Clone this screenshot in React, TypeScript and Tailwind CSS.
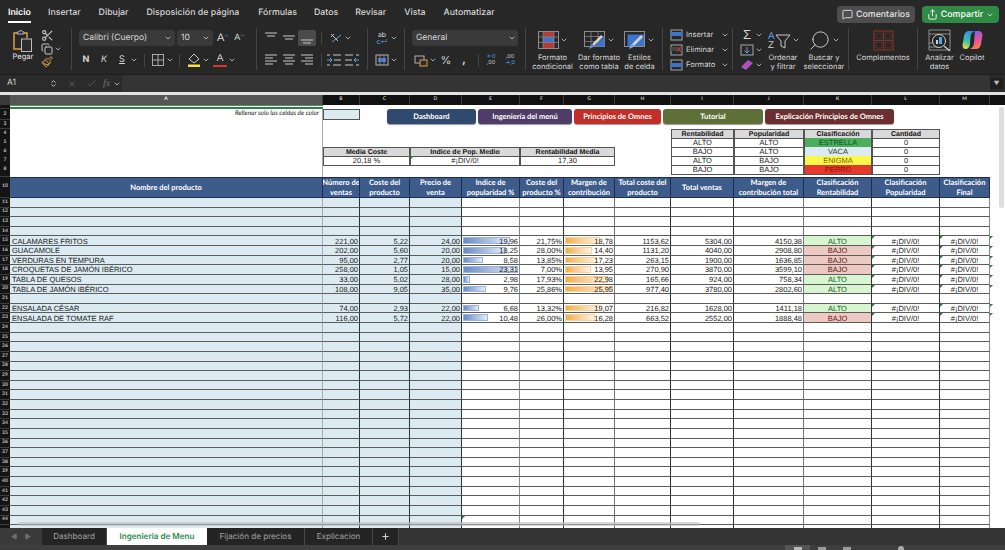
import type { ReactNode } from 'react'
import { ChevronDown, ChevronUp, Scissors, Copy, Paintbrush, MessageSquare, Share, X, Check, Search, Plus, Play } from 'lucide-react'

const COLS = 'grid grid-cols-[10px_313px_37px_50px_52px_58px_44px_51px_56px_63px_70px_68px_68px_50px_15px]'
const TEXT = "font-['Liberation_Sans',Arial,sans-serif]"
const LATO = "font-['Lato','Open_Sans',sans-serif]"

const tabs = [
  { name: 'Inicio', cls: 'ml-[8px] w-[23px] font-semibold text-white border-white' },
  { name: 'Insertar', cls: 'ml-[17px] border-transparent' },
  { name: 'Dibujar', cls: 'ml-[18px] border-transparent' },
  { name: 'Disposición de página', cls: 'ml-[18px] border-transparent' },
  { name: 'Fórmulas', cls: 'ml-[19px] border-transparent' },
  { name: 'Datos', cls: 'ml-[17px] border-transparent' },
  { name: 'Revisar', cls: 'ml-[17px] border-transparent' },
  { name: 'Vista', cls: 'ml-[18px] border-transparent' },
  { name: 'Automatizar', cls: 'ml-[18px] border-transparent' },
]

const colLetters = ['A', 'B', 'C', 'D', 'E', 'F', 'G', 'H', 'I', 'J', 'K', 'L', 'M']

// border colour of every column, the sheet mixes thin and medium lines
const colBorders = [
  'border-r-[#a8a8a8]', 'border-r-[#333]', 'border-r-[#333]', 'border-r-[#333]', 'border-r-[#888]', 'border-r-[#333]',
  'border-r-[#777]', 'border-r-[#333]', 'border-r-[#333]', 'border-r-[#777]', 'border-r-[#333]', 'border-r-[#333]', 'border-r-[#888]',
]

const headers = [
  ['Nombre del producto'], ['Número de', 'ventas'], ['Coste del', 'producto'], ['Precio de', 'venta'], ['Indice de', 'popularidad %'],
  ['Coste del', 'producto %'], ['Margen de', 'contribución'], ['Total coste del', 'producto'], ['Total ventas'],
  ['Margen de', 'contribución total'], ['Clasificación', 'Rentabilidad'], ['Clasificación', 'Popularidad'], ['Clasificación', 'Final'],
]

const products: Record<number, { name: string; v: string; c: string; p: string; ip: number; cp: string; m: number; tc: string; tv: string; mt: string; alto: boolean }> = {
  15: { name: 'CALAMARES FRITOS', v: '221,00', c: '5,22', p: '24,00', ip: 19.96, cp: '21,75%', m: 18.78, tc: '1153,62', tv: '5304,00', mt: '4150,38', alto: true },
  16: { name: 'GUACAMOLE', v: '202,00', c: '5,60', p: '20,00', ip: 18.25, cp: '28,00%', m: 14.4, tc: '1131,20', tv: '4040,00', mt: '2908,80', alto: false },
  17: { name: 'VERDURAS EN TEMPURA', v: '95,00', c: '2,77', p: '20,00', ip: 8.58, cp: '13,85%', m: 17.23, tc: '263,15', tv: '1900,00', mt: '1636,85', alto: false },
  18: { name: 'CROQUETAS DE JAMÓN IBÉRICO', v: '258,00', c: '1,05', p: '15,00', ip: 23.31, cp: '7,00%', m: 13.95, tc: '270,90', tv: '3870,00', mt: '3599,10', alto: false },
  19: { name: 'TABLA DE QUESOS', v: '33,00', c: '5,02', p: '28,00', ip: 2.98, cp: '17,93%', m: 22.98, tc: '165,66', tv: '924,00', mt: '758,34', alto: true },
  20: { name: 'TABLA DE JAMÓN IBÉRICO', v: '108,00', c: '9,05', p: '35,00', ip: 9.76, cp: '25,86%', m: 25.95, tc: '977,40', tv: '3780,00', mt: '2802,60', alto: true },
  22: { name: 'ENSALADA CÉSAR', v: '74,00', c: '2,93', p: '22,00', ip: 6.68, cp: '13,32%', m: 19.07, tc: '216,82', tv: '1628,00', mt: '1411,18', alto: true },
  23: { name: 'ENSALADA DE TOMATE RAF', v: '116,00', c: '5,72', p: '22,00', ip: 10.48, cp: '26,00%', m: 16.28, tc: '663,52', tv: '2552,00', mt: '1888,48', alto: false },
}

const miniRows = [
  { r: 'ALTO', p: 'ALTO', c: 'ESTRELLA', cls: 'bg-[#4cae5c] text-[#14501f]' },
  { r: 'BAJO', p: 'ALTO', c: 'VACA', cls: 'bg-[#dcebf1] text-[#333]' },
  { r: 'ALTO', p: 'BAJO', c: 'ENIGMA', cls: 'bg-[#fbf84c] text-[#7a6a00]' },
  { r: 'BAJO', p: 'BAJO', c: 'PERRO', cls: 'bg-[#e5392b] text-[#8f1410]' },
]

const num = (n: number) => n.toFixed(2).replace('.', ',')

function Chev({ cls = 'w-[10px]' }: { cls?: string }) {
  return (
    <span className={`flex justify-center text-[#c8c8c8] ${cls}`}>
      <ChevronDown size={8} strokeWidth={2.4} />
    </span>
  )
}

function Sep() {
  return <div className="w-px h-[42px] mt-[1px] bg-[#444] shrink-0" />
}

function VSep() {
  return <div className="w-px h-[13px] bg-[#444] shrink-0" />
}

// horizontal text lines, used for all the alignment buttons
function Lines({ kind }: { kind: 'top' | 'mid' | 'bottom' | 'left' | 'center' | 'right' }) {
  const sets = {
    top: [[1, 13, 2], [3, 9, 5]],
    mid: [[1, 13, 5], [3, 9, 8]],
    bottom: [[1, 13, 9], [3, 9, 12]],
    left: [[1, 13, 2], [1, 9, 5], [1, 13, 8], [1, 9, 11]],
    center: [[1, 13, 2], [3, 9, 5], [1, 13, 8], [3, 9, 11]],
    right: [[1, 13, 2], [5, 9, 5], [1, 13, 8], [5, 9, 11]],
  }
  return (
    <svg width="14" height="14" viewBox="0 0 14 14" stroke="#c8c8c8" strokeWidth="1">
      {sets[kind].map(([x, w, y], i) => <line key={i} x1={x} x2={x + w - 1} y1={y} y2={y} />)}
    </svg>
  )
}

function Big({ w, icon, chev = true, label }: { w: string; icon: ReactNode; chev?: boolean; label: string[] }) {
  return (
    <div className={`flex flex-col items-center shrink-0 ${w}`}>
      <div className="h-[26px] flex items-center gap-[1px]">
        {icon}
        {chev && <Chev cls="w-[8px]" />}
      </div>
      {label.map(l => (
        <span key={l} className="text-[7.5px] leading-[9px] text-[#d6d6d6] whitespace-nowrap">{l}</span>
      ))}
    </div>
  )
}

function CondIcon() {
  return (
    <svg width="21" height="18" viewBox="0 0 21 18">
      <rect x="0.5" y="0.5" width="20" height="17" fill="#2a2a2a" stroke="#8d8d8d" />
      <rect x="5" y="1" width="11" height="5" fill="#b53a36" />
      <rect x="5" y="6" width="11" height="5" fill="#3d74c9" />
      <rect x="5" y="11" width="11" height="6" fill="#b53a36" />
      <path d="M5 0.5V17.5M16 0.5V17.5M0.5 6H20.5M0.5 11.5H20.5" stroke="#8d8d8d" strokeWidth="0.7" />
    </svg>
  )
}

function TableIcon() {
  return (
    <svg width="22" height="19" viewBox="0 0 22 19">
      <rect x="0.5" y="0.5" width="20" height="15" fill="none" stroke="#8d8d8d" />
      <path d="M7 0.5V15.5M14 0.5V15.5M0.5 5.5H20.5M0.5 10.5H20.5" stroke="#8d8d8d" strokeWidth="0.7" />
      <path d="M20.5 5.5V15.5H10Z" fill="#3d74c9" />
      <path d="M8 13L17 4L19 6L10 15Z" fill="#d0d0d0" />
      <path d="M5 18Q6 14 8 13L10 15Q9 17 5 18Z" fill="#5b8fd8" />
    </svg>
  )
}

function StyleIcon() {
  return (
    <svg width="22" height="19" viewBox="0 0 22 19">
      <rect x="0.5" y="0.5" width="20" height="15" fill="none" stroke="#8d8d8d" />
      <path d="M3.5 3.5H20V15H3.5Z" fill="#3d74c9" />
      <path d="M8 13L17 4L19 6L10 15Z" fill="#d0d0d0" />
      <path d="M5 18Q6 14 8 13L10 15Q9 17 5 18Z" fill="#7fa6de" />
    </svg>
  )
}

function Copilot() {
  return (
    <svg width="21" height="20" viewBox="0 0 21 20">
      <defs>
        <linearGradient id="cpA" x1="0.6" y1="0" x2="0.3" y2="1">
          <stop offset="0" stopColor="#2f8ff0" />
          <stop offset="0.55" stopColor="#35c0a8" />
          <stop offset="1" stopColor="#e8d84a" />
        </linearGradient>
        <linearGradient id="cpB" x1="0.4" y1="0" x2="0.7" y2="1">
          <stop offset="0" stopColor="#7a62e8" />
          <stop offset="0.5" stopColor="#e84f9e" />
          <stop offset="1" stopColor="#f58b3a" />
        </linearGradient>
      </defs>
      <path d="M7 1H13Q9 2 8.5 7L8 14Q7.5 19 3.5 19Q0.5 19 0.5 15L2 6Q3 1 7 1Z" fill="url(#cpA)" />
      <path d="M13 1H16.5Q20 1 20.5 5L19 14Q18 19 14 19H7.5Q11.5 18 12 13L12.5 6Q12.5 3 13 1Z" fill="url(#cpB)" />
    </svg>
  )
}

function Ribbon() {
  const row = 'h-[16px] flex items-center'
  const col = 'flex flex-col gap-[6px] pt-[3px] shrink-0'
  const slot = 'flex items-center justify-center'
  return (
    <div className={`h-[47px] flex bg-[#272727] text-[#d6d6d6] font-['Inter',sans-serif]`}>
      {/* portapapeles */}
      <div className="w-[71px] shrink-0 flex pl-[10px]">
        <div className="flex flex-col items-center w-[26px]">
          <div className="h-[25px] flex items-end">
            <svg width="22" height="23" viewBox="0 0 22 23" fill="none">
              <path d="M5 4H2V20H9" stroke="#e0a043" strokeWidth="1.5" />
              <path d="M15 9V4H12" stroke="#e0a043" strokeWidth="1.5" />
              <path d="M5 5V3H7L8 1.5H9.5L10.5 3H12V5Z" stroke="#b9b9b9" />
              <rect x="9.5" y="10" width="10" height="12.5" fill="#2c2c2c" stroke="#bdbdbd" />
            </svg>
          </div>
          <span className="text-[7.5px] leading-[10px] font-medium">Pegar</span>
        </div>
        <div className="flex flex-col pl-[5px] pt-[2px] gap-[1px]">
          <Scissors size={13} className="text-[#c8c8c8]" />
          <div className="flex items-center"><Copy size={12} className="text-[#c8c8c8]" /><Chev cls="w-[9px]" /></div>
          <Paintbrush size={12} className="text-[#e0a043]" />
        </div>
      </div>
      <Sep />
      {/* fuente */}
      <div className={`${col} w-[184px] pl-[7px]`}>
        <div className={row}>
          <div className="w-[96px] h-[16px] rounded-[3px] bg-[#3a3a3a] flex items-center justify-between pl-[4px] pr-[2px] text-[8.5px]">
            Calibri (Cuerpo)<Chev />
          </div>
          <div className="ml-[2px] w-[36px] h-[16px] rounded-[3px] bg-[#3a3a3a] flex items-center justify-between pl-[4px] pr-[2px] text-[8.5px]">
            10<Chev />
          </div>
          <span className="ml-[4px] text-[11px] font-['Liberation_Sans',sans-serif]">A</span>
          <ChevronUp size={5} strokeWidth={3} className="mb-[5px] text-[#5aa2e8]" />
          <span className="ml-[5px] text-[9px] font-['Liberation_Sans',sans-serif]">A</span>
          <ChevronDown size={5} strokeWidth={3} className="mb-[5px] text-[#5aa2e8]" />
        </div>
        <div className={row}>
          <span className={`${slot} w-[14px] text-[9px] font-bold`}>N</span>
          <span className={`${slot} w-[14px] ml-[4px] text-[9px] italic`}>K</span>
          <span className={`${slot} w-[14px] ml-[4px] text-[9px] underline`}>S</span>
          <Chev />
          <span className="ml-[5px]"><VSep /></span>
          <svg className="ml-[6px]" width="14" height="14" viewBox="0 0 14 14" fill="none" stroke="#b4b4b4" strokeWidth="0.9">
            <rect x="1.5" y="1.5" width="11" height="11" />
            <path d="M7 1.5V12.5M1.5 7H12.5" />
          </svg>
          <Chev />
          <span className="ml-[4px]"><VSep /></span>
          <svg className="ml-[7px]" width="14" height="14" viewBox="0 0 14 14" fill="none">
            <path d="M7 1L12 6L7 10L2 6Z" stroke="#c8c8c8" />
            <rect x="1" y="11.5" width="12" height="2.5" fill="#f2e33d" />
          </svg>
          <Chev />
          <span className={`${slot} w-[14px] ml-[2px] text-[10px] font-['Liberation_Sans',sans-serif] pb-[2px] border-b-[2.5px] border-[#d8332c] h-[13px]`}>A</span>
          <Chev />
        </div>
      </div>
      <Sep />
      {/* alineacion */}
      <div className={`${col} w-[110px] pl-[5px]`}>
        <div className={row}>
          <span className={`${slot} w-[18px]`}><Lines kind="top" /></span>
          <span className={`${slot} w-[18px]`}><Lines kind="mid" /></span>
          <span className={`${slot} w-[18px] h-[16px] rounded-[2px] bg-[#4b4b4b]`}><Lines kind="bottom" /></span>
          <span className="ml-[5px]"><VSep /></span>
          <svg className="ml-[7px]" width="14" height="14" viewBox="0 0 14 14" fill="none" stroke="#c8c8c8">
            <path d="M2 3L9 10" />
            <path d="M3 11L12 4" stroke="#5aa2e8" />
            <path d="M2 6L5 3" />
          </svg>
          <Chev />
        </div>
        <div className={row}>
          <span className={`${slot} w-[18px]`}><Lines kind="left" /></span>
          <span className={`${slot} w-[18px]`}><Lines kind="center" /></span>
          <span className={`${slot} w-[18px]`}><Lines kind="right" /></span>
          <span className="ml-[5px]"><VSep /></span>
          <svg className="ml-[4px]" width="16" height="14" viewBox="0 0 16 14" fill="none" stroke="#c8c8c8">
            <path d="M7 2H15M7 12H15M8 7H15M1 2H4M1 12H4" />
            <path d="M1 7H6M4 5L6 7L4 9" stroke="#5aa2e8" />
          </svg>
          <svg className="ml-[2px]" width="16" height="14" viewBox="0 0 16 14" fill="none" stroke="#c8c8c8">
            <path d="M1 2H9M1 12H9M1 7H8M12 2H15M12 12H15" />
            <path d="M10 7H15M12 5L10 7L12 9" stroke="#5aa2e8" />
          </svg>
        </div>
      </div>
      <Sep />
      {/* ajustar y combinar */}
      <div className={`${col} w-[36px] pl-[7px]`}>
        <div className={row}>
          <span className="w-[14px] text-[7px] leading-[7px] text-center">ab<br /><span className="text-[#5aa2e8]">c↵</span></span>
          <Chev />
        </div>
        <div className={row}>
          <svg width="14" height="14" viewBox="0 0 14 14" fill="none">
            <rect x="1" y="2" width="12" height="10" stroke="#b4b4b4" />
            <rect x="3" y="5" width="8" height="4" fill="#3d74c9" />
            <path d="M5 2V12M9 2V12" stroke="#b4b4b4" strokeWidth="0.6" />
          </svg>
          <Chev />
        </div>
      </div>
      <Sep />
      {/* numero */}
      <div className={`${col} w-[120px]`}>
        <div className={row}>
          <div className="ml-[7px] w-[106px] h-[16px] rounded-[3px] bg-[#3a3a3a] flex items-center justify-between pl-[4px] pr-[1px] text-[8.5px]">
            General<Chev />
          </div>
        </div>
        <div className={row}>
          <svg className="ml-[9px]" width="14" height="14" viewBox="0 0 14 14" fill="none">
            <rect x="1" y="3" width="9" height="7" stroke="#b4b4b4" />
            <rect x="6" y="7" width="7" height="6" fill="#2c2c2c" stroke="#e0a043" />
          </svg>
          <Chev />
          <span className={`${slot} w-[16px] text-[11px] text-[#cfcfcf]`}>%</span>
          <span className={`${slot} w-[16px] ml-[2px] text-[12px] font-bold text-[#cfcfcf] pb-[2px]`}>,</span>
          <span className="ml-[6px]"><VSep /></span>
          <span className="w-[14px] ml-[5px] text-[5.5px] leading-[6px] text-center text-[#5aa2e8]">←0<br /><span className="text-[#cfcfcf]">,00</span></span>
          <span className="w-[14px] ml-[5px] text-[5.5px] leading-[6px] text-center text-[#cfcfcf]">,00<br /><span className="text-[#5aa2e8]">→,0</span></span>
        </div>
      </div>
      <Sep />
      {/* estilos */}
      <div className="w-[136px] shrink-0 flex">
        <Big w="w-[53px]" icon={<CondIcon />} label={['Formato', 'condicional']} />
        <Big w="w-[40px]" icon={<TableIcon />} label={['Dar formato', 'como tabla']} />
        <Big w="w-[41px]" icon={<StyleIcon />} label={['Estilos', 'de celda']} />
      </div>
      <Sep />
      {/* celdas */}
      <div className="w-[69px] shrink-0 flex flex-col pl-[7px] text-[7.5px]">
        {['Insertar', 'Eliminar', 'Formato'].map((t, i) => (
          <div key={t} className="h-[15px] flex items-center gap-[3px]">
            <svg width="13" height="12" viewBox="0 0 13 12" fill="none">
              <rect x="1" y="1" width="11" height="10" stroke="#a8a8a8" />
              <rect x="1" y={i === 2 ? 4 : 3} width="11" height="4" fill={i === 1 ? '#444' : '#3d74c9'} />
              {i === 1 && <path d="M7 3L11 8M11 3L7 8" stroke="#d8332c" />}
            </svg>
            <span className="w-[32px]">{t}</span>
            <Chev cls="w-[8px]" />
          </div>
        ))}
      </div>
      <Sep />
      {/* edicion */}
      <div className="w-[115px] shrink-0 flex">
        <div className="flex flex-col pl-[7px] w-[33px]">
          <div className="h-[15px] flex items-center"><span className="w-[14px] text-center text-[13px] leading-none font-['Liberation_Sans',sans-serif]">Σ</span><Chev /></div>
          <div className="h-[15px] flex items-center">
            <svg width="14" height="12" viewBox="0 0 14 12" fill="none">
              <rect x="1" y="1" width="12" height="10" stroke="#a8a8a8" />
              <path d="M7 3V9M4.5 6.5L7 9L9.5 6.5" stroke="#5aa2e8" />
            </svg>
            <Chev />
          </div>
          <div className="h-[15px] flex items-center">
            <svg width="14" height="12" viewBox="0 0 14 12"><path d="M1 8L8 1L13 4L6 11Z" fill="#b04fc4" /></svg>
            <Chev />
          </div>
        </div>
        <Big
          w="w-[34px]"
          icon={
            <svg width="24" height="22" viewBox="0 0 24 22" fill="none">
              <text x="1" y="10" fontSize="10" fill="#5aa2e8" fontFamily="Liberation Sans">A</text>
              <text x="1" y="19" fontSize="10" fill="#cfcfcf" fontFamily="Liberation Sans">Z</text>
              <path d="M9 6H23L18 12V19L14 17V12Z" stroke="#c8c8c8" />
            </svg>
          }
          label={['Ordenar', 'y filtrar']}
        />
        <Big
          w="w-[48px]"
          icon={<Search size={23} strokeWidth={1} className="-scale-x-100 text-[#d0d0d0]" />}
          label={['Buscar y', 'seleccionar']}
        />
      </div>
      <Sep />
      {/* complementos */}
      <div className="w-[68px] shrink-0 flex">
        <Big
          w="w-[68px]"
          chev={false}
          icon={
            <svg width="21" height="21" viewBox="0 0 21 21" fill="none" stroke="#7b3526" strokeWidth="1.2">
              <rect x="1" y="1" width="19" height="19" />
              <path d="M10.5 1V20M1 10.5H20" />
              <rect x="3" y="3" width="5.5" height="5.5" strokeWidth="0.5" />
              <rect x="12.5" y="3" width="5.5" height="5.5" strokeWidth="0.5" />
              <rect x="3" y="12.5" width="5.5" height="5.5" strokeWidth="0.5" />
              <rect x="12.5" y="12.5" width="5.5" height="5.5" strokeWidth="0.5" />
            </svg>
          }
          label={['Complementos']}
        />
      </div>
      <Sep />
      {/* analisis */}
      <div className="flex pl-[1px]">
        <Big
          w="w-[41px]"
          chev={false}
          icon={
            <svg width="23" height="23" viewBox="0 0 23 23" fill="none" stroke="#a8a8a8">
              <rect x="1" y="1" width="21" height="20" strokeWidth="0.8" />
              <path d="M1 5H22M1 14H5M1 18H9" strokeWidth="0.8" />
              <circle cx="11" cy="12" r="6.5" stroke="#d0d0d0" />
              <path d="M16 17L22 22" stroke="#d0d0d0" strokeWidth="1.3" />
              <rect x="8" y="11" width="2" height="4" fill="#d0d0d0" stroke="none" />
              <rect x="11" y="8" width="3" height="7" fill="#5aa2e8" stroke="none" />
            </svg>
          }
          label={['Analizar', 'datos']}
        />
        <Big w="w-[24px]" chev={false} icon={<Copilot />} label={['Copilot']} />
      </div>
    </div>
  )
}

function FormulaBar() {
  return (
    <div className="h-[18px] flex items-center bg-[#2b2b2b] border-t border-[#1d1d1d] text-[#cfcfcf] font-['Inter',sans-serif]">
      <div className="w-[58px] shrink-0 flex items-center justify-between pl-[7px] pr-[1px] text-[8.5px]">
        A1
        <span className="flex flex-col -space-y-[3px]">
          <ChevronUp size={7} strokeWidth={3} />
          <ChevronDown size={7} strokeWidth={3} />
        </span>
      </div>
      <X size={10} className="ml-[9px] text-[#5c5c5c]" />
      <Check size={11} className="ml-[9px] text-[#5c5c5c]" />
      <span className="ml-[6px] w-[10px] text-[10px] italic font-['Liberation_Serif',serif] text-[#777]">fx</span>
      <Chev cls="w-[8px]" />
      <div className="ml-[1px] w-[868px] h-[17px] bg-[#343434] rounded-[2px]" />
      <div className="w-[13px] h-[11px] flex items-center justify-center bg-[#1f1f1f] text-[#bbb] text-[6px]">▼</div>
    </div>
  )
}

function Label({ n }: { n?: number }) {
  return (
    <div className={`${LATO} bg-[#141414] border-b border-[#3c3c3c] text-[#c4c4c4] text-[5px] font-bold leading-none flex items-center justify-center overflow-hidden`}>
      {n}
    </div>
  )
}

function Tick() {
  return <span className="absolute left-0 top-0 w-0 h-0 border-t-[3px] border-r-[3px] border-t-[#2d7d3a] border-r-transparent" />
}

const miniHead = `${TEXT} bg-[#d9d9d9] border border-[#555] text-[7px] font-bold text-[#111] flex items-center justify-center leading-none whitespace-nowrap pt-[1px]`
const miniCell = `${TEXT} border-x border-b border-[#555] text-[7.5px] flex items-center justify-center leading-none pt-[1px]`

function MiniRow({ i }: { i: number }) {
  const m = miniRows[i]
  return (
    <>
      <div className={`${miniCell} col-start-10 text-[#222]`}>{m.r}</div>
      <div className={`${miniCell} text-[#222]`}>{m.p}</div>
      <div className={`${miniCell} ${m.cls}`}>{m.c}</div>
      <div className={`${miniCell} text-[#222]`}>0</div>
    </>
  )
}

function TopRows() {
  const aCell = 'border-r border-r-[#a8a8a8] bg-white'
  return (
    <>
      <div className={`${COLS} h-[4px]`}>
        <Label />
        <div className="border-t border-[#4b8f5f] border-b-2 border-b-[#2f7d4a]" />
      </div>
      <div className={`${COLS} h-[11px]`}>
        <Label n={2} />
        <div className={`${aCell} ${LATO} text-[6.5px] italic text-[#222] flex items-center justify-end pr-[3px] leading-none`}>
          Rellenar solo las celdas de color
        </div>
        <div className="bg-[#dcebf1] border border-[#555]" />
      </div>
      <div className={`${COLS} h-[9px]`}><Label n={3} /><div className={aCell} /></div>
      <div className={`${COLS} h-[9px]`}>
        <Label n={4} />
        <div className={aCell} />
        <div className={`${miniHead} col-start-10`}>Rentabilidad</div>
        <div className={miniHead}>Popularidad</div>
        <div className={miniHead}>Clasificación</div>
        <div className={miniHead}>Cantidad</div>
      </div>
      <div className={`${COLS} h-[9px]`}><Label n={5} /><div className={aCell} /><MiniRow i={0} /></div>
      <div className={`${COLS} h-[9px]`}>
        <Label n={6} />
        <div className={aCell} />
        <div className={`${miniHead} col-span-2`}>Media Coste</div>
        <div className={`${miniHead} col-span-2`}>Indice de Pop. Medio</div>
        <div className={`${miniHead} col-span-2`}>Rentabilidad Media</div>
        <MiniRow i={1} />
      </div>
      <div className={`${COLS} h-[9px]`}>
        <Label n={7} />
        <div className={aCell} />
        <div className={`${miniCell} col-span-2 text-[#222]`}>20,18 %</div>
        <div className={`${miniCell} col-span-2 relative text-[#222]`}><Tick />#¡DIV/0!</div>
        <div className={`${miniCell} col-span-2 text-[#222]`}>17,30</div>
        <MiniRow i={2} />
      </div>
      <div className={`${COLS} h-[9px]`}><Label n={8} /><div className={aCell} /><MiniRow i={3} /></div>
      <div className={`${COLS} h-[2.7px]`}><Label /><div className={aCell} /></div>
    </>
  )
}

function HeaderRow() {
  return (
    <div className={`${COLS} h-[21.3px]`}>
      <Label n={10} />
      {headers.map(lines => (
        <div
          key={lines.join()}
          className={`${LATO} bg-[#3d5c8c] border-y border-y-[#1d2f50] border-r border-r-[#1d2f50] text-white text-[7.5px] font-bold flex flex-col items-center justify-center pt-[1px] leading-[10px] overflow-hidden whitespace-nowrap`}
        >
          {lines.map(l => <span key={l}>{l}</span>)}
        </div>
      ))}
    </div>
  )
}

function DataRow({ n }: { n: number }) {
  const p = products[n]
  const base = 'border-b border-b-[#5c5c5c] border-r flex items-center pt-[1px] leading-none overflow-hidden whitespace-nowrap relative'
  const num2 = 'justify-end pr-[1px]'
  const blue = 'bg-[#dcebf1]'
  const mid = 'justify-center'
  return (
    <div className={`${COLS} h-[9.64px] ${TEXT} text-[7.5px] text-[#1a1a1a]`}>
      <Label n={n < 45 ? n : undefined} />
      <div className={`${base} ${colBorders[0]} ${blue} pl-[2px]`}>{p?.name}</div>
      <div className={`${base} ${colBorders[1]} ${blue} ${num2}`}>{p?.v}</div>
      <div className={`${base} ${colBorders[2]} ${blue} ${num2}`}>{p?.c}</div>
      <div className={`${base} ${colBorders[3]} ${blue} ${num2}`}>{p?.p}</div>
      <div className={`${base} ${colBorders[4]} ${num2}`}>
        {n === 44 && <Tick />}
        {p && (
          <>
            <span
              className="absolute left-[1px] top-[1px] bottom-[1px] bg-linear-to-r from-[#6a8bc5] to-[#e6edf7] border border-[#9db4dc]"
              style={{ width: `${(p.ip / 23.31) * 96}%` }}
            />
            <span className="relative">{num(p.ip)}</span>
          </>
        )}
      </div>
      <div className={`${base} ${colBorders[5]} ${num2}`}>{p?.cp}</div>
      <div className={`${base} ${colBorders[6]} ${num2}`}>
        {p && (
          <>
            <span
              className="absolute left-[1px] top-[1px] bottom-[1px] bg-linear-to-r from-[#f2ae45] to-[#fdf3e2] border border-[#f7d39b]"
              style={{ width: `${(p.m / 25.95) * 96}%` }}
            />
            <span className="relative">{num(p.m)}</span>
          </>
        )}
      </div>
      <div className={`${base} ${colBorders[7]} ${num2}`}>{p?.tc}</div>
      <div className={`${base} ${colBorders[8]} ${num2}`}>{p?.tv}</div>
      <div className={`${base} ${colBorders[9]} ${num2}`}>{p?.mt}</div>
      <div className={`${base} ${colBorders[10]} ${mid} ${p ? (p.alto ? 'bg-[#d6f5d0] text-[#1c5c1c]' : 'bg-[#ecc9c3] text-[#5c1a14]') : ''}`}>
        {p && (p.alto ? 'ALTO' : 'BAJO')}
      </div>
      <div className={`${base} ${colBorders[11]} ${mid}`}>{p && <><Tick />#¡DIV/0!</>}</div>
      <div className={`${base} ${colBorders[12]} ${mid}`}>{p && <><Tick />#¡DIV/0!</>}</div>
      <div className="relative">{p && <Tick />}</div>
    </div>
  )
}

function Sheet() {
  const rows = Array.from({ length: 35 }, (_, i) => i + 11)
  return (
    <div className="relative h-[433px] overflow-hidden bg-white">
      <div className={`${COLS} h-[10px] bg-[#111]`}>
        <div className="bg-[#3a3a3a]" />
        {colLetters.map((c, i) => (
          <div
            key={c}
            className={`${LATO} text-[5px] font-bold flex items-center justify-center border-r border-[#3c3c3c] ${i === 0 ? 'bg-[#555] text-white' : 'text-[#c4c4c4]'}`}
          >
            {c}
          </div>
        ))}
      </div>
      <TopRows />
      <HeaderRow />
      {rows.map(n => <DataRow key={n} n={n} />)}

      {/* botones flotantes encima de las celdas */}
      <div className={`${LATO} absolute left-[387px] top-[14px] flex gap-[2px] text-white text-[7.5px] font-bold`}>
        <div className="w-[89px] h-[15px] rounded-[3px] bg-[#30496f] shadow-[0_1px_1px_#0006] flex items-center justify-center">Dashboard</div>
        <div className="w-[94px] h-[15px] rounded-[3px] bg-[#4f3d69] shadow-[0_1px_1px_#0006] flex items-center justify-center">Ingeniería del menú</div>
        <div className="w-[87px] h-[15px] rounded-[3px] bg-[#c22f29] shadow-[0_1px_1px_#0006] flex items-center justify-center">Principios de Omnes</div>
        <div className="w-[100px] h-[15px] rounded-[3px] bg-[#5f7037] shadow-[0_1px_1px_#0006] flex items-center justify-center">Tutorial</div>
        <div className="w-[129px] h-[15px] rounded-[3px] bg-[#6a2f2e] shadow-[0_1px_1px_#0006] flex items-center justify-center">Explicación Principios de Omnes</div>
      </div>

      {/* barras de desplazamiento */}
      <div className="absolute left-[18px] top-[427px] w-[682px] h-[4px] rounded-full bg-[#bdbdbd]/60" />
      <div className="absolute left-[999px] top-[12px] w-[5px] h-[101px] rounded-full bg-[#dedede]" />
    </div>
  )
}

function SheetTabs() {
  const tab = 'h-[17px] flex items-center justify-center bg-[#242424] text-[#a3a3a3] border-r border-[#4a4a4a]'
  return (
    <div className="h-[17px] flex bg-[#333] text-[8.1px] font-['Inter',sans-serif]">
      <div className="w-[42px] flex items-center justify-center gap-[6px] bg-[#3a3a3a] text-[#6e6e6e]">
        <Play size={7} fill="currentColor" className="rotate-180" />
        <Play size={7} fill="currentColor" />
      </div>
      <div className={`${tab} w-[65px]`}>Dashboard</div>
      <div className="w-[100px] flex items-center justify-center bg-white text-[#2f8a4f] font-semibold">Ingenieria de Menu</div>
      <div className={`${tab} w-[98px]`}>Fijación de precios</div>
      <div className={`${tab} w-[68px]`}>Explicacion</div>
      <div className={`${tab} w-[26px] text-[#d0d0d0]`}><Plus size={9} strokeWidth={3} /></div>
    </div>
  )
}

function StatusBar() {
  return (
    <div className="h-[5px] flex items-start bg-[#3e3e3e] overflow-hidden">
      <div className="ml-[785px] w-[25px] h-[5px] bg-[#555] flex justify-center pt-[2px]"><span className="w-[8px] h-[3px] bg-[#bbb]" /></div>
      <span className="ml-[8px] mt-[2px] w-[8px] h-[3px] bg-[#999]" />
      <span className="ml-[17px] mt-[2px] w-[8px] h-[3px] bg-[#999]" />
      <span className="ml-[47px] mt-[1px] w-[6px] h-[4px] rounded-t-full bg-[#aaa]" />
    </div>
  )
}

export default function App() {
  return (
    <div className="w-[1005px] h-[550px] overflow-hidden flex flex-col bg-[#272727] [text-rendering:geometricPrecision]">
      <div className="h-[27px] flex items-start bg-[#272727] text-[#d6d6d6] text-[8.8px] font-medium font-['Inter',sans-serif]">
        {tabs.map(t => (
          <span key={t.name} className={`mt-[6px] leading-[14px] pb-[1px] border-b-2 whitespace-nowrap ${t.cls}`}>{t.name}</span>
        ))}
        <div className="ml-auto mt-[6px] flex gap-[7px] pr-[6px]">
          <div className="w-[78px] h-[17px] rounded-[4px] bg-[#4d4d4d] flex items-center justify-center gap-[3px] text-[#e4e4e4]">
            <MessageSquare size={11} />Comentarios
          </div>
          <div className="w-[77px] h-[17px] rounded-[4px] bg-[#2f8a45] flex items-center justify-center gap-[3px] text-white">
            <Share size={11} />Compartir<ChevronDown size={8} />
          </div>
        </div>
      </div>
      <Ribbon />
      <FormulaBar />
      <div className="h-[3px] bg-[#e2e2e2]" />
      <Sheet />
      <SheetTabs />
      <StatusBar />
    </div>
  )
}
